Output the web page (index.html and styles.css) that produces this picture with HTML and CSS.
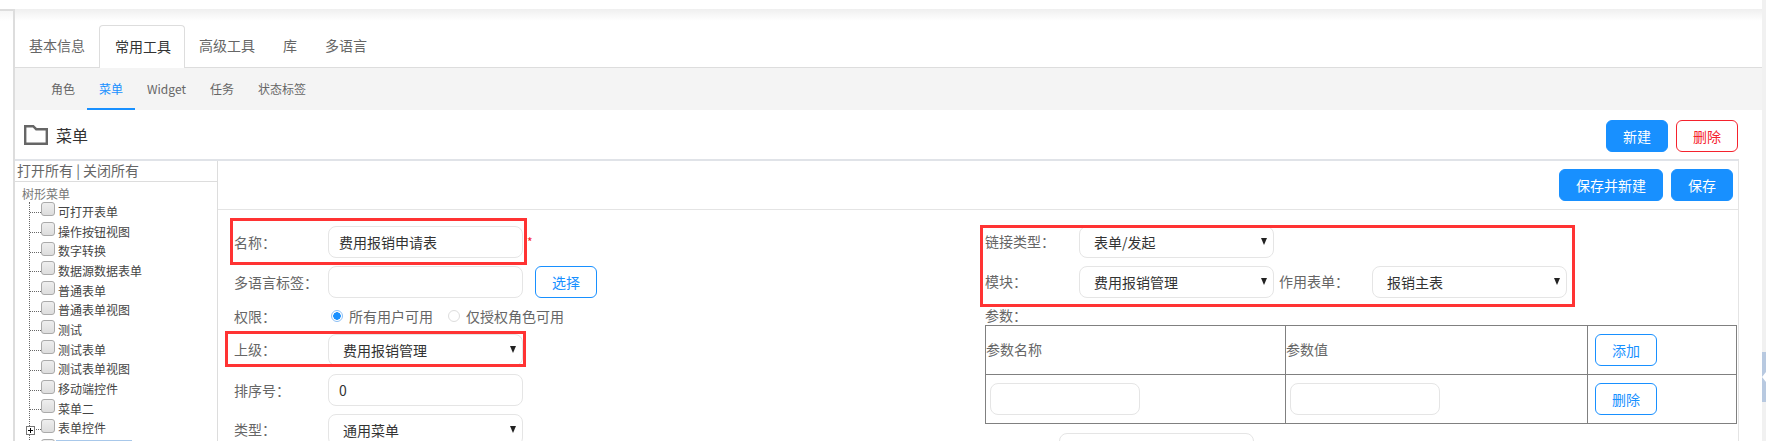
FILE: index.html
```html
<!DOCTYPE html>
<html lang="zh-CN">
<head>
<meta charset="utf-8">
<title>菜单</title>
<link rel="stylesheet" href="styles.css">
</head>
<body>
<div class="page">
  <div class="gutter"></div>
  <div class="main">
    <nav class="tabs">
      <a class="tab">基本信息</a>
      <a class="tab tab-active">常用工具</a>
      <a class="tab">高级工具</a>
      <a class="tab">库</a>
      <a class="tab">多语言</a>
    </nav>
    <nav class="subtabs">
      <a class="subtab">角色</a>
      <a class="subtab subtab-active">菜单</a>
      <a class="subtab">Widget</a>
      <a class="subtab">任务</a>
      <a class="subtab">状态标签</a>
    </nav>
    <header class="head">
      <svg class="folder" width="24" height="20" viewBox="0 0 24 20"><path d="M1.2 1.2h8l3 3h10.6v14.6H1.2z" fill="none" stroke="#666" stroke-width="2.4"/></svg>
      <h1 class="title">菜单</h1>
      <div class="head-actions">
        <button class="btn btn-primary">新建</button>
        <button class="btn btn-danger">删除</button>
      </div>
    </header>
    <section class="panel">
      <aside class="side">
        <div class="side-top">打开所有 | 关闭所有</div>
        <div class="tree-title">树形菜单</div>
        <ul class="tree">
          <li class="node"><i class="branch"></i><input class="check" type="checkbox"><span>可打开表单</span></li>
          <li class="node"><i class="branch"></i><input class="check" type="checkbox"><span>操作按钮视图</span></li>
          <li class="node"><i class="branch"></i><input class="check" type="checkbox"><span>数字转换</span></li>
          <li class="node"><i class="branch"></i><input class="check" type="checkbox"><span>数据源数据表单</span></li>
          <li class="node"><i class="branch"></i><input class="check" type="checkbox"><span>普通表单</span></li>
          <li class="node"><i class="branch"></i><input class="check" type="checkbox"><span>普通表单视图</span></li>
          <li class="node"><i class="branch"></i><input class="check" type="checkbox"><span>测试</span></li>
          <li class="node"><i class="branch"></i><input class="check" type="checkbox"><span>测试表单</span></li>
          <li class="node"><i class="branch"></i><input class="check" type="checkbox"><span>测试表单视图</span></li>
          <li class="node"><i class="branch"></i><input class="check" type="checkbox"><span>移动端控件</span></li>
          <li class="node"><i class="branch"></i><input class="check" type="checkbox"><span>菜单二</span></li>
          <li class="node"><b class="plus"></b><i class="branch"></i><input class="check" type="checkbox"><span>表单控件</span></li>
          <li class="node"><i class="branch"></i><input class="check" type="checkbox"><span class="node-selected"></span></li>
        </ul>
      </aside>
      <div class="content">
        <div class="toolbar">
          <button class="btn btn-primary">保存并新建</button>
          <button class="btn btn-primary">保存</button>
        </div>
        <div class="form">
          <div class="col">
            <div class="row"><label class="label">名称：</label><input class="field" value="费用报销申请表"><em class="star">*</em></div>
            <div class="row"><label class="label">多语言标签：</label><input class="field"><button class="btn btn-outline pick">选择</button></div>
            <div class="row row-radio">
              <label class="label">权限：</label>
              <span class="radio radio-on"></span><span class="radio-text">所有用户可用</span>
              <span class="radio"></span><span class="radio-text">仅授权角色可用</span>
            </div>
            <div class="row"><label class="label label-up">上级：</label><div class="pick-wrap"><select class="select"><option>费用报销管理</option></select></div></div>
            <div class="row"><label class="label">排序号：</label><input class="field" value="0"></div>
            <div class="row"><label class="label label-up">类型：</label><div class="pick-wrap"><select class="select"><option>通用菜单</option></select></div></div>
          </div>
          <div class="col">
            <div class="row"><label class="label label-up">链接类型：</label><div class="pick-wrap"><select class="select"><option>表单/发起</option></select></div></div>
            <div class="row"><label class="label label-up">模块：</label><div class="pick-wrap"><select class="select"><option>费用报销管理</option></select></div><label class="label label-second label-up">作用表单：</label><div class="pick-wrap"><select class="select"><option>报销主表</option></select></div></div>
            <div class="param-title">参数：</div>
            <table class="params">
              <tr><td class="c1">参数名称</td><td class="c2">参数值</td><td class="c3"><button class="btn btn-outline">添加</button></td></tr>
              <tr><td><input class="field field-small"></td><td><input class="field field-small"></td><td class="c3"><button class="btn btn-outline">删除</button></td></tr>
            </table>
            <div class="row row-after"><input class="field"></div>
          </div>
        </div>
      </div>
    </section>
  </div>
  <div class="rail"><div class="handle"></div></div>
  <div class="mark mark-name"></div>
  <div class="mark mark-parent"></div>
  <div class="mark mark-link"></div>
</div>
</body>
</html>
```
FILE: styles.css
```css
* { box-sizing: border-box; }
html, body { margin: 0; height: 441px; overflow: hidden; background: #fff; }
body { font-family: "Noto Sans CJK SC", "Noto Sans", "Liberation Sans", sans-serif; font-size: 14px; color: #666; }
ul { list-style: none; margin: 0; padding: 0; }
button, input, select { font-family: inherit; font-size: 14px; margin: 0; }

.page { position: relative; display: flex; width: 1766px; height: 441px; overflow: hidden; }
.gutter { flex: 0 0 15px; margin-top: 9px; border-top: 2px solid #ddd; border-right: 2px solid #ddd; background: linear-gradient(#f6f6f6, #fff 10px); }
.main { flex: 1; min-width: 0; margin-top: 9px; }
.rail { position: relative; flex: 0 0 4px; background: #f1f1f1; }
.handle { position: absolute; left: 0; top: 352px; width: 4px; height: 50px; background: #b8c9e0; }
.handle::after { content: ""; position: absolute; left: 0; top: 20px; border: 5px solid transparent; border-left-width: 0; border-right: 4px solid #fff; }

.tabs { display: flex; height: 59px; padding-top: 16px; border-bottom: 1px solid #ddd; background: linear-gradient(#efefef, #fff 12px); }
.tab { height: 42px; padding: 0 14px; line-height: 41px; color: #666; }
.tab-active { height: 43px; padding: 0 13px 0 15px; border: 1px solid #ddd; border-bottom: 0; border-radius: 4px 4px 0 0; background: #fff; color: #333; }

.subtabs { display: flex; height: 42px; padding-left: 24px; background: #f4f4f4; }
.subtab { padding: 0 12px; font-size: 12px; line-height: 42px; color: #666; }
.subtab-active { color: #1890ff; border-bottom: 2px solid #1890ff; }

.head { display: flex; align-items: flex-start; height: 49px; margin-right: 24px; padding-top: 10px; }
.folder { margin: 5px 0 0 9px; }
.title { margin: 3px 0 0 8px; font-size: 16px; font-weight: 400; line-height: 24px; color: #333; }
.head-actions { display: flex; gap: 8px; margin-left: auto; }

.btn { height: 32px; padding: 0 16px; border: 1px solid transparent; border-radius: 6px; background: #fff; line-height: 28px; white-space: nowrap; }
.btn-primary { background: #1890ff; border-color: #1890ff; color: #fff; }
.btn-danger { border-color: #f5222d; color: #f5222d; }
.btn-outline { border-color: #1890ff; color: #1890ff; }

.panel { display: flex; height: 290px; margin-right: 23px; border-top: 2px solid #e0e3e8; border-right: 1px solid #e4e4e4; }
.side { flex: 0 0 203px; border-right: 1px solid #ddd; overflow: hidden; }
.side-top { height: 21px; padding-left: 2px; border-bottom: 1px solid #ddd; line-height: 18px; white-space: nowrap; }
.tree-title { height: 20px; padding-left: 7px; font-size: 12px; line-height: 23px; color: #777; }
.tree { margin-left: 14px; border-left: 1px dotted #666; }
.node { position: relative; display: flex; align-items: center; height: 19.7px; font-size: 12px; color: #444; white-space: nowrap; }
.branch { flex: 0 0 11px; height: 0; border-top: 1px dotted #666; margin-top: 2px; }
.check { appearance: none; flex: 0 0 14px; width: 14px; height: 14px; margin: -5px 3px 0 0; border: 1px solid #aaa; border-radius: 3px; background: linear-gradient(#eee, #ddd); }
.node span { line-height: 16px; }
.node .node-selected { width: 76px; height: 16px; margin-left: -2px; border-top: 1px solid #a8c8ea; background: #dbe9f8; }
.plus { position: absolute; left: -4px; top: 7px; width: 9px; height: 9px; border: 1px solid #777; background: linear-gradient(#000, #000) center / 5px 1px no-repeat, linear-gradient(#000, #000) center / 1px 5px no-repeat, #fff; }

.content { flex: 1; min-width: 0; }
.toolbar { display: flex; justify-content: flex-end; gap: 8px; height: 49px; padding: 8px 5px 0 0; border-bottom: 1px solid #e4e4e4; }
.form { display: grid; grid-template-columns: 751px 1fr; padding: 16px 0 0 16px; }
.col { min-width: 0; }
.row { display: flex; align-items: center; height: 32px; margin-bottom: 8px; }
.row-radio { height: 20px; }
.row-after { margin: 9px 0 0 74px; }
.label { flex: 0 0 94px; white-space: nowrap; }
.label-up { padding-bottom: 3px; }
.label-second { flex-basis: 93px; margin-left: 5px; }
.field { width: 195px; height: 32px; padding: 0 10px; border: 1px solid #e5e5e5; border-radius: 8px; outline: 0; background: #fff; color: #333; }
.field-small { width: 150px; }
.star { align-self: flex-start; margin: 10px 0 0 4px; font-size: 12px; line-height: 12px; font-style: normal; color: #f5222d; }
.pick { margin-left: 12px; }

.pick-wrap { position: relative; flex: 0 0 195px; height: 32px; }
.pick-wrap::after { content: ""; position: absolute; right: 7px; top: 12px; border: 3px solid transparent; border-top: 7px solid #222; border-bottom: 0; }
.select { appearance: none; width: 100%; height: 32px; padding: 0 14px; border: 1px solid #e5e5e5; border-radius: 8px; background: #fff; color: #333; outline: 0; }

.radio { flex: 0 0 12px; width: 12px; height: 12px; margin-left: 3px; border: 1px solid #ddd; border-radius: 50%; }
.radio-on { border-color: #8cc0f5; background: radial-gradient(circle, #1890ff 0 3.5px, #fff 4px); }
.radio-text { margin: 0 12px 0 6px; }

.param-title { height: 19px; line-height: 18px; }
.params { width: 752px; height: 98px; border-collapse: collapse; table-layout: fixed; }
.params td { height: 49px; padding: 0 0 2px 0; border: 1px solid #808080; }
.params tr + tr td { padding: 0 0 0 4px; }
.c1 { width: 300px; }
.c2 { width: 302px; }
.params .c3 { padding: 0 0 0 7px; }
.params tr + tr .c3 { padding-left: 7px; }

.mark { position: absolute; border: 3px solid #f33; }
.mark-name { left: 230px; top: 218px; width: 297px; height: 47px; }
.mark-parent { left: 225px; top: 331px; width: 301px; height: 36px; }
.mark-link { left: 980px; top: 225px; width: 595px; height: 82px; }
```
